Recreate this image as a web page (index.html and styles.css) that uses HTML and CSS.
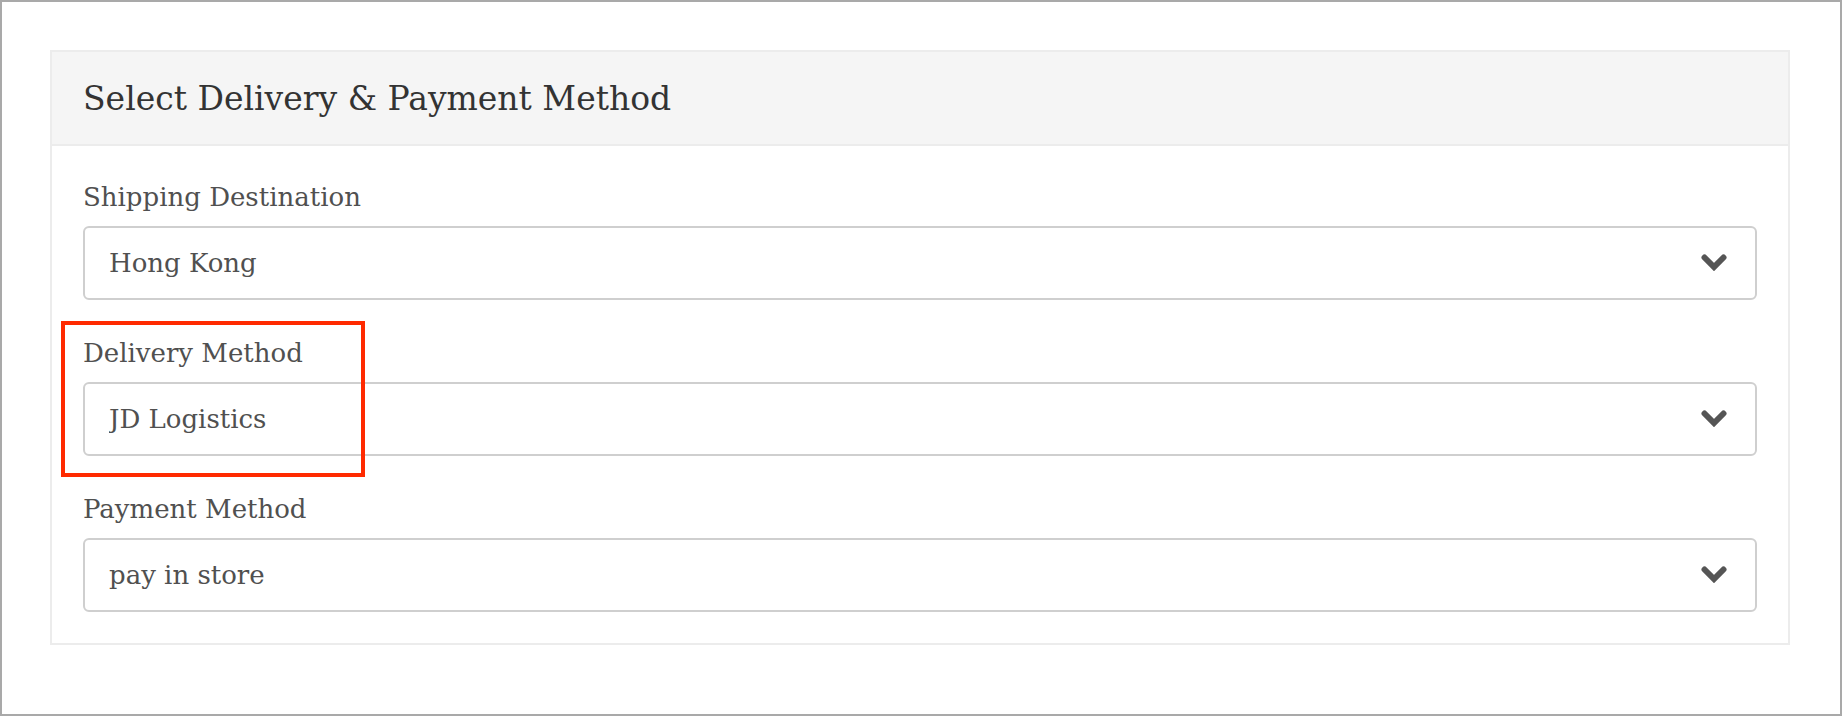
FILE: index.html
```html
<!DOCTYPE html>
<html lang="en">
<head>
  <meta charset="UTF-8" />
  <meta name="viewport" content="width=device-width, initial-scale=1.0"/>
  <title>Select Delivery &amp; Payment Method</title>
  <link rel="stylesheet" href="styles.css">
</head>
<body>

  <div class="frame">
    <div class="panel">
      <div class="panel-heading">
        <h3 class="panel-title">Select Delivery &amp; Payment Method</h3>
      </div>

      <div class="panel-body">
        <div class="form-group">
          <label for="destination">Shipping Destination</label>
          <div class="select-wrap">
            <select id="destination">
              <option>Hong Kong</option>
            </select>
            <svg class="chevron" width="26" height="17" viewBox="0 0 26 17">
              <path d="M3.5 3.5 L13 13 L22.5 3.5" />
            </svg>
          </div>
        </div>

        <div class="form-group highlighted">
          <label for="delivery">Delivery Method</label>
          <div class="select-wrap">
            <select id="delivery">
              <option>JD Logistics</option>
            </select>
            <svg class="chevron" width="26" height="17" viewBox="0 0 26 17">
              <path d="M3.5 3.5 L13 13 L22.5 3.5" />
            </svg>
          </div>
          <div class="mark"></div>
        </div>

        <div class="form-group">
          <label for="payment">Payment Method</label>
          <div class="select-wrap">
            <select id="payment">
              <option>pay in store</option>
            </select>
            <svg class="chevron" width="26" height="17" viewBox="0 0 26 17">
              <path d="M3.5 3.5 L13 13 L22.5 3.5" />
            </svg>
          </div>
        </div>
      </div>
    </div>
  </div>

</body>
</html>
```

FILE: styles.css
```css
* {
  box-sizing: border-box;
}

body {
  margin: 0;
  font-family: 'DejaVu Serif', 'Liberation Serif', serif;
  background: #fff;
}

.frame {
  height: 716px;
  border: 2px solid #a9a9a9;
  padding: 48px 50px 0 48px;
}

.panel {
  border: 2px solid #ececec;
  background: #fff;
}

.panel-heading {
  height: 94px;
  display: flex;
  align-items: center;
  padding: 0 31px 0 31px;
  background: #f5f5f5;
  border-bottom: 2px solid #ececec;
}

.panel-title {
  margin: 0;
  font-size: 33px;
  font-weight: normal;
  color: #333;
}

.panel-body {
  padding: 31px 31px 31px 31px;
}

.form-group {
  margin-bottom: 33px;
}

.form-group:last-child {
  margin-bottom: 0;
}

.form-group label {
  display: block;
  font-size: 26px;
  line-height: 40px;
  color: #505050;
  margin-bottom: 9px;
}

.select-wrap {
  position: relative;
}

.select-wrap select {
  display: block;
  width: 100%;
  height: 74px;
  padding: 0 24px;
  border: 2px solid #cfcfcf;
  border-radius: 6px;
  background: #fff;
  font-family: inherit;
  font-size: 26px;
  color: #505050;
  -webkit-appearance: none;
  appearance: none;
}

.chevron {
  position: absolute;
  right: 30px;
  top: 28px;
  fill: none;
  stroke: #555;
  stroke-width: 6;
  stroke-linecap: round;
  stroke-linejoin: miter;
}

.highlighted {
  position: relative;
}

.mark {
  position: absolute;
  left: -22px;
  top: -12px;
  width: 304px;
  height: 156px;
  border: 4px solid #ff2a00;
  pointer-events: none;
}
```
